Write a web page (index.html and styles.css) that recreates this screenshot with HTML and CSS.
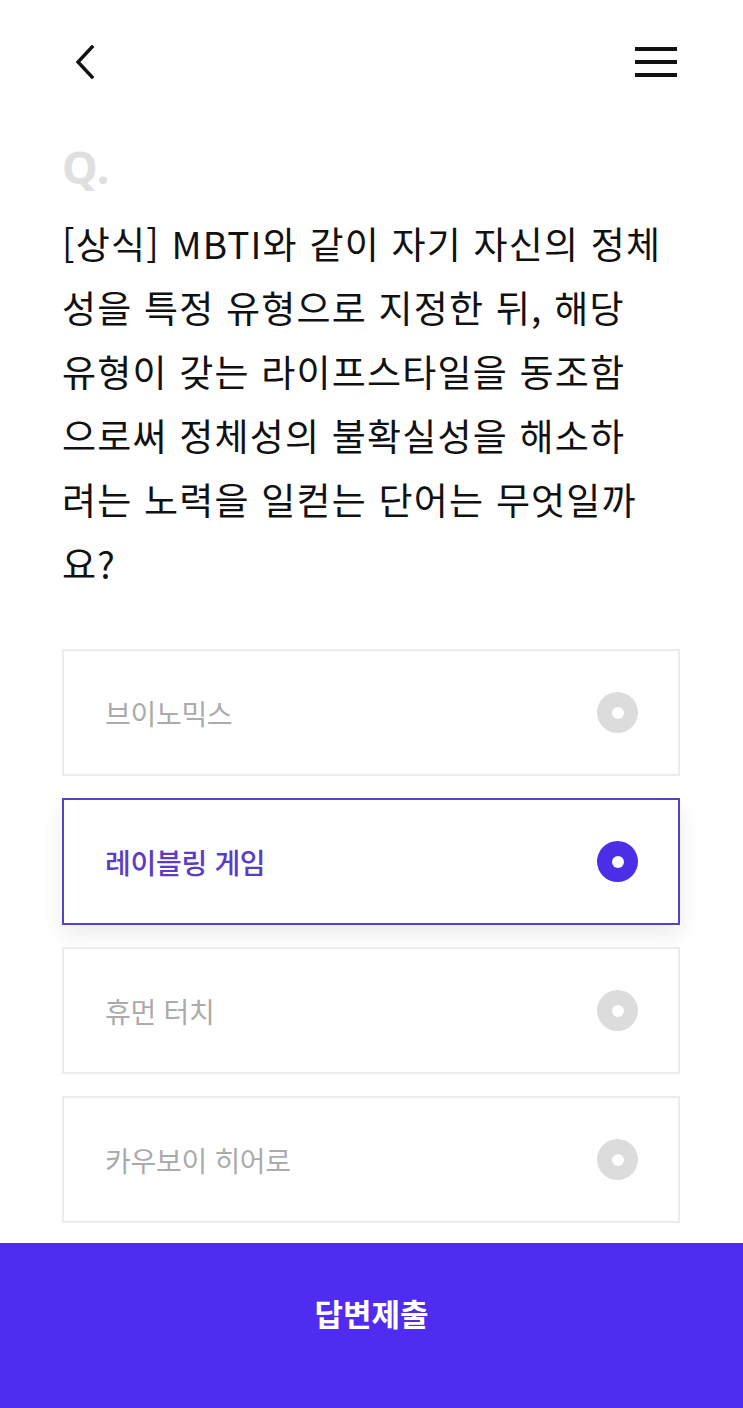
FILE: index.html
```html
<!DOCTYPE html>
<html lang="ko">
<head>
<meta charset="utf-8">
<title>퀴즈</title>
<link rel="stylesheet" href="styles.css">
</head>
<body>
<div class="page">
  <header class="topbar">
    <button class="icon-btn back" aria-label="뒤로">
      <svg width="20" height="34" viewBox="0 0 20 34"><path d="M17 2 L3 17 L17 32" fill="none" stroke="#111" stroke-width="3.4" stroke-linecap="square" stroke-linejoin="miter"/></svg>
    </button>
    <button class="icon-btn menu" aria-label="메뉴">
      <span class="bar"></span><span class="bar"></span><span class="bar"></span>
    </button>
  </header>

  <main class="content">
    <div class="q-mark">Q.</div>
    <p class="question">[상식] MBTI와 같이 자기 자신의 정체<br>성을 특정 유형으로 지정한 뒤, 해당<br>유형이 갖는 라이프스타일을 동조함<br>으로써 정체성의 불확실성을 해소하<br>려는 노력을 일컫는 단어는 무엇일까<br>요?</p>

    <ul class="options">
      <li class="option"><span class="opt-text">브이노믹스</span><span class="radio"></span></li>
      <li class="option selected"><span class="opt-text">레이블링 게임</span><span class="radio"></span></li>
      <li class="option"><span class="opt-text">휴먼 터치</span><span class="radio"></span></li>
      <li class="option"><span class="opt-text">카우보이 히어로</span><span class="radio"></span></li>
    </ul>
  </main>

  <footer class="submit-bar">
    <button class="submit">답변제출</button>
  </footer>
</div>
</body>
</html>
```

FILE: styles.css
```css
* { box-sizing: border-box; }
html, body { margin: 0; padding: 0; background: #fff; }
body {
  font-family: "Noto Sans CJK KR", "Noto Sans", sans-serif;
  color: #111;
}
.page {
  width: 743px;
  height: 1408px;
  display: flex;
  flex-direction: column;
  overflow: hidden;
}
.topbar {
  height: 124px;
  display: flex;
  justify-content: space-between;
  align-items: center;
  padding: 0 66px 0 75px;
}
.icon-btn {
  border: 0;
  background: none;
  padding: 0;
  display: flex;
  cursor: pointer;
}
.menu {
  flex-direction: column;
  gap: 9px;
  width: 42px;
}
.menu .bar {
  display: block;
  height: 4px;
  width: 42px;
  background: #111;
}
.content {
  flex: 1;
  padding: 0 50px 0 62px;
}
.q-mark {
  font-family: "Noto Sans", sans-serif;
  font-weight: 700;
  font-size: 45px;
  line-height: 44px;
  color: #e0e0e0;
  margin-top: 21px;
  letter-spacing: 1px;
}
.question {
  margin: 22px 0 0;
  font-size: 37px;
  line-height: 64px;
  font-weight: 400;
  color: #111;
  letter-spacing: 1.2px;
  white-space: nowrap;
}
.options {
  list-style: none;
  margin: 54px 13px 0 0;
  padding: 0;
  display: flex;
  flex-direction: column;
  gap: 22px;
}
.option {
  height: 127px;
  border: 2px solid #ececec;
  background: #fff;
  display: flex;
  align-items: center;
  justify-content: space-between;
  padding: 0 40px 0 41px;
}
.opt-text {
  font-size: 28px;
  font-weight: 400;
  color: #ababab;
  letter-spacing: -0.3px;
}
.radio {
  width: 41px;
  height: 41px;
  border-radius: 50%;
  background: #dcdcdc;
  display: flex;
  align-items: center;
  justify-content: center;
}
.radio::after {
  content: "";
  width: 12px;
  height: 12px;
  border-radius: 50%;
  background: #fff;
}
.option.selected {
  border-color: #5a40c4;
  box-shadow: 0 10px 22px rgba(0, 0, 0, 0.08);
}
.option.selected .opt-text {
  color: #5a3cc6;
  font-weight: 500;
}
.option.selected .radio {
  background: #4d2ee8;
}
.submit-bar {
  height: 165px;
  background: #4f2cf0;
  display: flex;
  justify-content: center;
  padding-top: 50px;
}
.submit {
  border: 0;
  background: none;
  color: #fff;
  font-family: "Noto Sans CJK KR", sans-serif;
  font-weight: 700;
  font-size: 31px;
  line-height: 40px;
  height: 40px;
  padding: 0;
  letter-spacing: 0;
}
```
